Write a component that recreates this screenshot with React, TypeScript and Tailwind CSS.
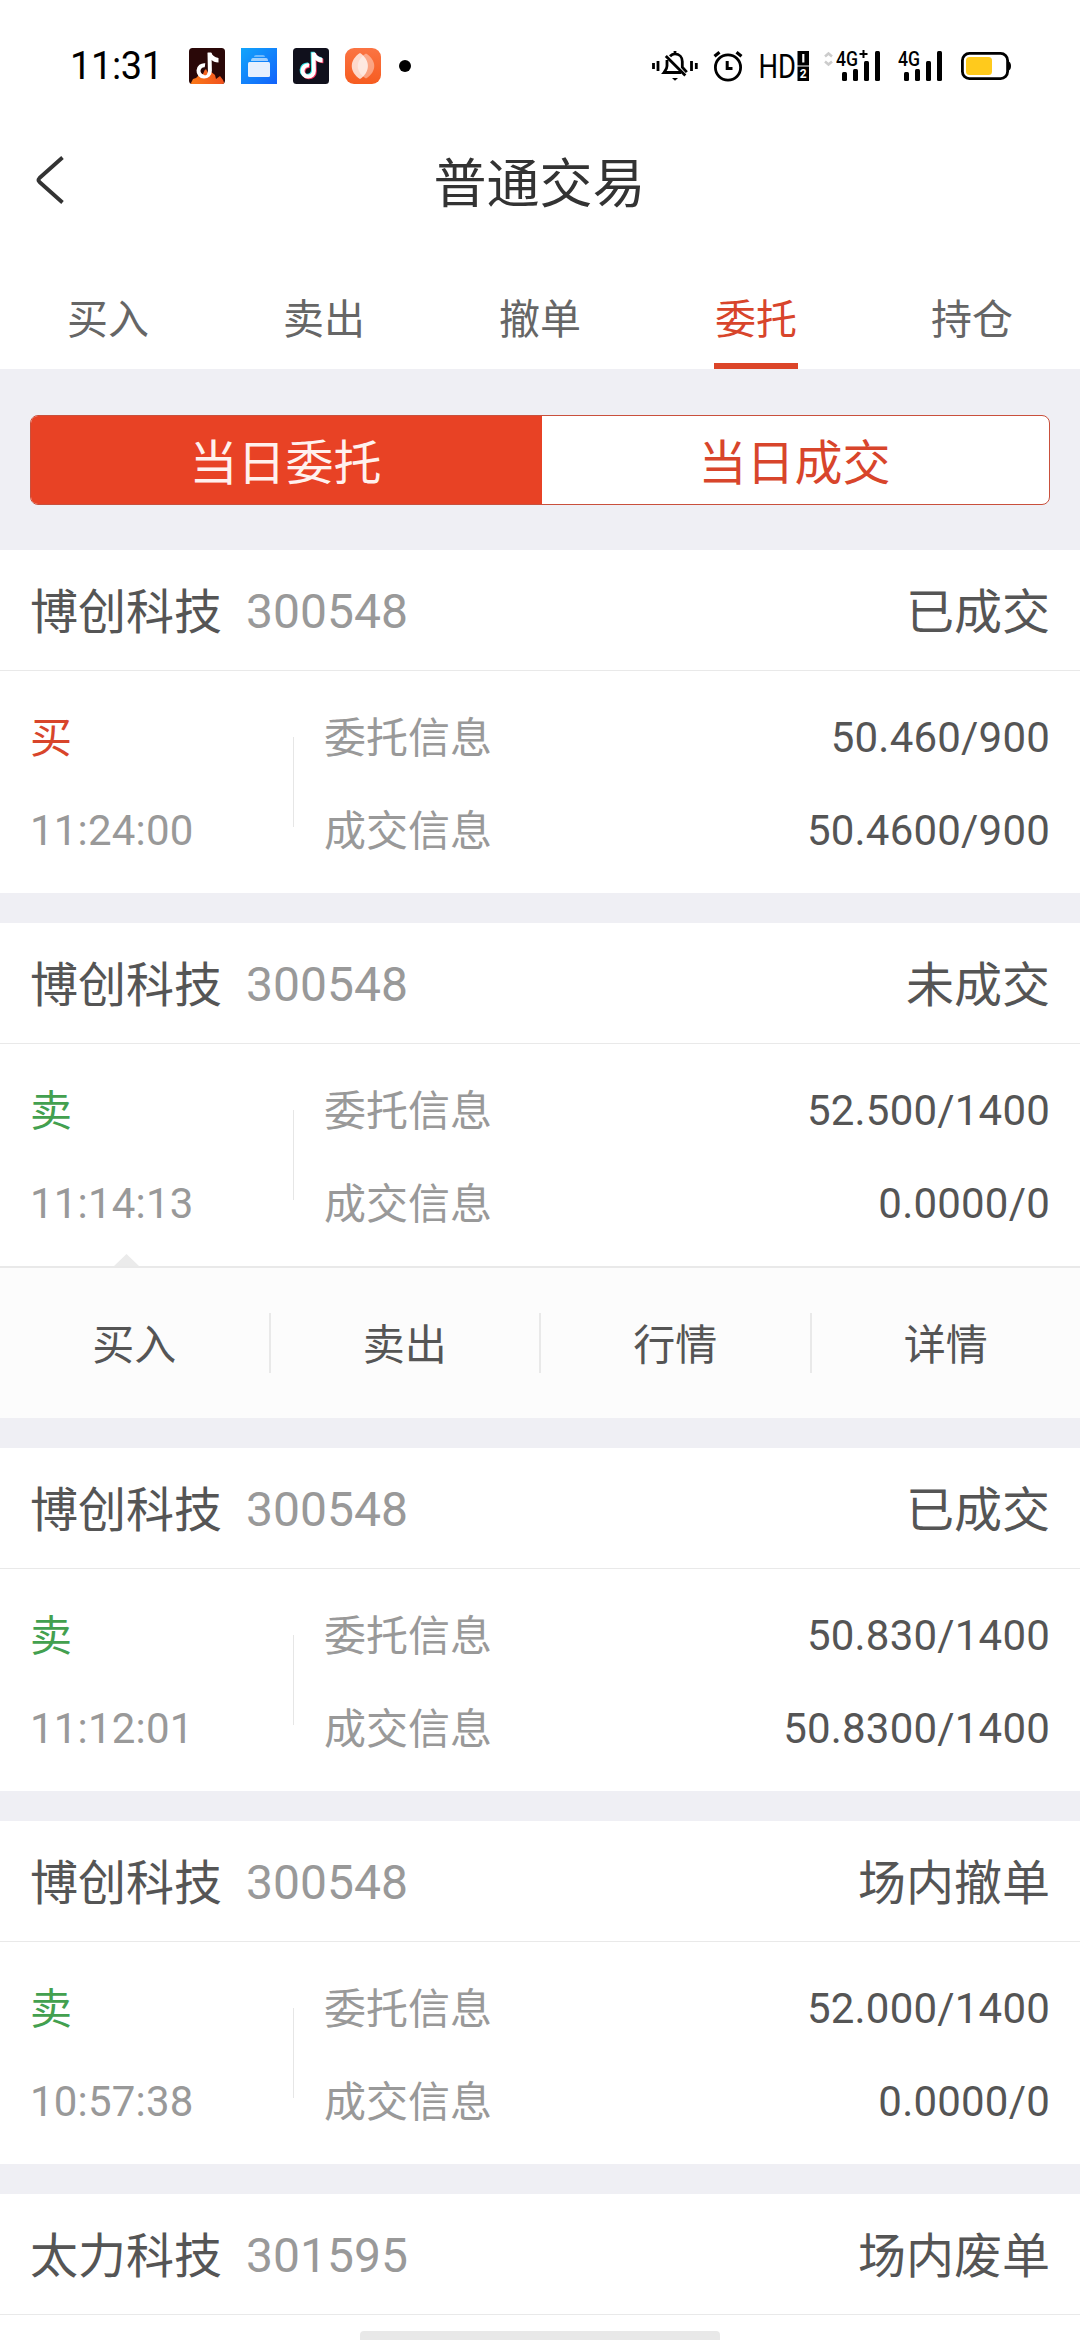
import React, { useState } from 'react';

interface Order {
    id: number;
    name: string;
    code: string;
    status: string;
    side: 'buy' | 'sell';
    time: string;
    entrust: string;
    deal: string;
}

const orders: Order[] = [
    { id: 1, name: '博创科技', code: '300548', status: '已成交', side: 'buy', time: '11:24:00', entrust: '50.460/900', deal: '50.4600/900' },
    { id: 2, name: '博创科技', code: '300548', status: '未成交', side: 'sell', time: '11:14:13', entrust: '52.500/1400', deal: '0.0000/0' },
    { id: 3, name: '博创科技', code: '300548', status: '已成交', side: 'sell', time: '11:12:01', entrust: '50.830/1400', deal: '50.8300/1400' },
    { id: 4, name: '博创科技', code: '300548', status: '场内撤单', side: 'sell', time: '10:57:38', entrust: '52.000/1400', deal: '0.0000/0' },
];

// only its header row fits on the first screen
const lastOrder = { name: '太力科技', code: '301595', status: '场内废单' };

const tabs = ['买入', '卖出', '撤单', '委托', '持仓'];
const actions = ['买入', '卖出', '行情', '详情'];

const Note: React.FC<{ color: string; dx?: number; dy?: number }> = ({ color, dx = 0, dy = 0 }) => (
    <g transform={`translate(${dx} ${dy})`}>
        <path d="M16 17.200a5.700 5.700 0 1 0 4.900 5.600L20.500 5" fill="none" stroke={color} strokeWidth="4" />
        <path d="M18.500 4.500h3.700c1 3 3.300 4.500 7.300 5.500v4.400c-3.500 0-5.500-1-7.500-2.600Z" fill={color} />
    </g>
);

const FlameNoteIcon: React.FC = () => (
    <svg width="36" height="36" viewBox="0 0 36 36">
        <defs>
            <clipPath id="flame-clip"><rect width="36" height="36" rx="3.500" /></clipPath>
            <linearGradient id="flame" x1="0" y1="0" x2="1" y2="0">
                <stop offset="0" stopColor="#fb7a18" />
                <stop offset="1" stopColor="#f0501e" />
            </linearGradient>
        </defs>
        <g clipPath="url(#flame-clip)">
            <rect width="36" height="36" fill="#2a0808" />
            <path d="M1 37l3-6 3-1 3-3 5-1 6-3 5 4 1 4 4-3 3 4 2 5Z" fill="url(#flame)" />
            <Note color="#fff" />
            <path d="M14 26l1.500-3.500 1.500-1.500 1.500 3-.5 2.500-2 1Z" fill="#f4641e" />
        </g>
    </svg>
);

const FilesIcon: React.FC = () => (
    <svg width="36" height="36" viewBox="0 0 36 36">
        <defs>
            <linearGradient id="files" x1="0" y1="0" x2="1" y2="1">
                <stop offset="0" stopColor="#12a5fb" />
                <stop offset="1" stopColor="#1262fb" />
            </linearGradient>
        </defs>
        <rect width="36" height="36" fill="url(#files)" />
        <path d="M13 9q0-2 2-2h7q2 0 2 2Z" fill="#fff" opacity=".4" />
        <path d="M10 13q0-3 2-3h13q2 0 2 3Z" fill="#fff" opacity=".6" />
        <rect x="7" y="14" width="22" height="15" rx="1.500" fill="#e6f0fe" />
    </svg>
);

const NoteIcon: React.FC = () => (
    <svg width="36" height="36" viewBox="0 0 36 36">
        <rect width="36" height="36" rx="3.500" fill="#10101c" />
        <Note color="#2de2e6" dx={-0.9} dy={-0.7} />
        <Note color="#f5325b" dx={0.9} dy={0.8} />
        <Note color="#fff" />
    </svg>
);

const PetalIcon: React.FC = () => (
    <svg width="36" height="36" viewBox="0 0 36 36">
        <defs>
            <linearGradient id="petal" x1="0" y1="0" x2="0" y2="1">
                <stop offset="0" stopColor="#fb7443" />
                <stop offset="1" stopColor="#f65c20" />
            </linearGradient>
        </defs>
        <rect width="36" height="36" rx="9" fill="url(#petal)" />
        <path d="M21 5.500c11 7 11 18 0 25-11-7-11-18 0-25Z" fill="#fff" opacity=".4" />
        <path d="M15 5c10.500 7 10.500 19 0 26-11-7-11-19 0-26Z" fill="#fff" opacity=".75" />
    </svg>
);

const MutedBellIcon: React.FC = () => (
    <svg width="46" height="32" viewBox="0 0 46 32" fill="none" stroke="#000" strokeWidth="2.800">
        <path d="M1.500 13v6M6 11v10M39.500 11v10M44.300 13v6" />
        <path d="M18 6.200c1.400-1.500 3-2.300 5-2.300 4.400 0 7.300 3.300 7.300 7.700v5.500l4.500 5M15 10v6c0 3-1 4-3 6.500h17M23 1v3" />
        <path d="M13.800 6l19.500 19.500" />
        <path d="M20 28h6l-3 2.800Z" fill="#000" stroke="none" />
    </svg>
);

const AlarmIcon: React.FC = () => (
    <svg width="30" height="32" viewBox="0 0 30 32" fill="none" stroke="#000" strokeWidth="2.800">
        <circle cx="15" cy="17.500" r="12.600" />
        <path d="M14.200 11v7.500h5.300" strokeWidth="3" />
        <path d="M1.500 6.200l5-4M28.500 6.200l-5-4" strokeWidth="3.200" />
    </svg>
);

const HdIcon: React.FC = () => (
    <svg width="52" height="46" viewBox="-2 -7 52 46" fontFamily="Roboto, sans-serif">
        <text x="-1.500" y="28" fontSize="33.500" textLength="37.500" lengthAdjust="spacingAndGlyphs">HD</text>
        <rect x="37.500" y="1" width="11.500" height="14.500" />
        <rect x="37.500" y="16.500" width="11.500" height="14.500" />
        <path d="M43.300 4v8.500" stroke="#fff" strokeWidth="2.200" />
        <text x="43.300" y="28.300" fontSize="12" fontWeight="700" fill="#fff" textAnchor="middle">2</text>
    </svg>
);

const SignalIcon: React.FC<{ plus?: boolean }> = ({ plus }) => (
    <svg width="46" height="46" viewBox="0 -7 46 46" fontFamily="Roboto, sans-serif">
        <text x="0" y="16" fontSize="21" fontWeight="500" textLength="22" lengthAdjust="spacingAndGlyphs">4G</text>
        {plus && <path d="M27.500 0v8M23.500 4h8" stroke="#000" strokeWidth="2" />}
        <rect x="6" y="22" width="5" height="9" rx="1.500" />
        <rect x="17" y="19" width="5" height="12" rx="1.500" />
        <rect x="28" y="11" width="5" height="20" rx="1.500" />
        <rect x="39" y="1" width="5" height="30" rx="1.500" />
    </svg>
);

const BatteryIcon: React.FC = () => (
    <svg width="50" height="28" viewBox="0 0 50 28">
        <rect x="1.400" y="1.400" width="45.200" height="25.200" rx="7" fill="none" stroke="#000" strokeWidth="2.800" />
        <path d="M47 9q3 1 3 5t-3 5Z" />
        <rect x="5" y="5" width="26" height="18" rx="3.500" fill="#ffca1c" />
    </svg>
);

const StatusBar: React.FC = () => (
    <div className="flex items-center h-[132px] pl-[70px] pr-[69px]">
        <span className="w-[119px] text-[38px] leading-[40px] tracking-[-0.4px] text-black">11:31</span>
        <div className="flex items-center gap-4">
            <FlameNoteIcon />
            <FilesIcon />
            <NoteIcon />
            <PetalIcon />
        </div>
        <div className="ml-[18px] size-3 rounded-full bg-black" />
        <div className="ml-auto flex items-center">
            <MutedBellIcon />
            <div className="ml-[15px]"><AlarmIcon /></div>
            <div className="ml-[15px]"><HdIcon /></div>
            <svg className="ml-[14px] mb-[14px]" width="9" height="16" viewBox="0 0 9 16" fill="none" stroke="#ccc" strokeWidth="2.500">
                <path d="M1 5.500l3.500-3 3.500 3M1 10.500l3.500 3 3.500-3" />
            </svg>
            <div className="ml-[3px]"><SignalIcon plus /></div>
            <div className="ml-4"><SignalIcon /></div>
            <div className="ml-[17px]"><BatteryIcon /></div>
        </div>
    </div>
);

const OrderHeader: React.FC<{ name: string; code: string; status: string }> = ({ name, code, status }) => (
    <div className="flex justify-between h-[121px] px-[30px] pt-[33px] border-b border-[#e9e9e9] text-[48px] leading-[60px] text-[#555]">
        <div className="flex gap-6">
            <span>{name}</span>
            <span className="-mt-px text-[#999]">{code}</span>
        </div>
        <span>{status}</span>
    </div>
);

const OrderCard: React.FC<{ order: Order; expanded: boolean; onToggle: () => void }> = ({ order, expanded, onToggle }) => (
    <div className="bg-white" onClick={onToggle}>
        <OrderHeader name={order.name} code={order.code} status={order.status} />
        <div className="relative flex h-[222px] pt-[37px] px-[30px] text-[42px] leading-[62px] text-[#999]">
            <div className="flex flex-col gap-[31px] w-[263px]">
                <span className={order.side === 'buy' ? 'text-[#d8452b]' : 'text-[#43a04f]'}>
                    {order.side === 'buy' ? '买' : '卖'}
                </span>
                <span className="-mt-px tracking-[0.2px]">{order.time}</span>
            </div>
            <div className="mt-[29px] mr-[30px] h-[90px] w-px bg-[#e6e6e6]" />
            <div className="flex flex-col gap-[31px]">
                <span>委托信息</span>
                <span>成交信息</span>
            </div>
            <div className="ml-auto -mt-px flex flex-col gap-[31px] text-right tracking-[0.2px] text-[#555]">
                <span>{order.entrust}</span>
                <span>{order.deal}</span>
            </div>
            {expanded && (
                <svg className="absolute bottom-0 left-[114px]" width="25" height="12" viewBox="0 0 25 12">
                    <path d="M0 12L12.500 0L25 12Z" fill="#ebebeb" />
                </svg>
            )}
        </div>
        {expanded && (
            <div className="flex items-center h-[152px] border-t-2 border-[#e9e9e9] bg-[#fcfcfc]">
                {actions.map((action, i) => (
                    <button
                        key={action}
                        className={`flex-1 h-[60px] pt-[3px] text-[42px] leading-[60px] text-[#555] ${i < actions.length - 1 ? 'border-r-2 border-[#e9e9e9]' : ''}`}
                    >
                        {action}
                    </button>
                ))}
            </div>
        )}
    </div>
);

const App: React.FC = () => {
    const [activeTab, setActiveTab] = useState('委托');
    const [segment, setSegment] = useState('当日委托');
    const [openId, setOpenId] = useState(2);

    return (
        <div className="relative w-[1080px] h-[2340px] overflow-hidden bg-[#efeff4] font-[Roboto,'Noto_Sans_CJK_SC',sans-serif]">
            <div className="bg-white h-[369px]">
                <StatusBar />
                <div className="grid grid-cols-[1fr_auto_1fr] items-center h-[98px] pl-[35px] pr-[36px]">
                    <svg className="mb-0.5" width="30" height="48" viewBox="0 0 30 48" fill="none" stroke="#333" strokeWidth="3.800">
                        <path d="M27.500 1.500L4.500 22q-2 2 0 4L27.500 46.500" />
                    </svg>
                    <h1 className="pt-[7px] text-[53px] leading-[70px] text-[#333]">普通交易</h1>
                </div>
                <div className="flex h-[139px]">
                    {tabs.map((tab) => (
                        <button
                            key={tab}
                            onClick={() => setActiveTab(tab)}
                            className={`flex-1 flex flex-col items-center justify-between pt-[60px] text-[41px] leading-[60px] ${
                                activeTab === tab ? 'text-[#d8452b]' : 'text-[#666]'
                            }`}
                        >
                            {tab}
                            {activeTab === tab && <span className="w-[84px] h-1.5 bg-[#dc4529]" />}
                        </button>
                    ))}
                </div>
            </div>

            <div className="h-[181px] px-[30px] pt-[46px]">
                <div className="grid grid-cols-[511px_1fr] h-[90px] rounded-lg border border-[#c9503c] bg-white overflow-hidden">
                    {['当日委托', '当日成交'].map((label) => (
                        <button
                            key={label}
                            onClick={() => setSegment(label)}
                            className={`pt-1 pr-0.5 text-[48px] leading-[88px] ${
                                segment === label ? 'bg-[#e84225] text-[#fff1ee]' : 'text-[#d8452b]'
                            }`}
                        >
                            {label}
                        </button>
                    ))}
                </div>
            </div>

            <div className="flex flex-col gap-[30px]">
                {orders.map((order) => (
                    <OrderCard key={order.id} order={order} expanded={openId === order.id} onToggle={() => setOpenId(order.id)} />
                ))}
                <div className="h-[146px] bg-white">
                    <OrderHeader name={lastOrder.name} code={lastOrder.code} status={lastOrder.status} />
                </div>
            </div>

            {/* system gesture bar */}
            <div className="absolute bottom-0 left-[360px] w-[360px] h-[9px] rounded-t bg-[#e8e8e8]" />
        </div>
    );
};

export default App;
